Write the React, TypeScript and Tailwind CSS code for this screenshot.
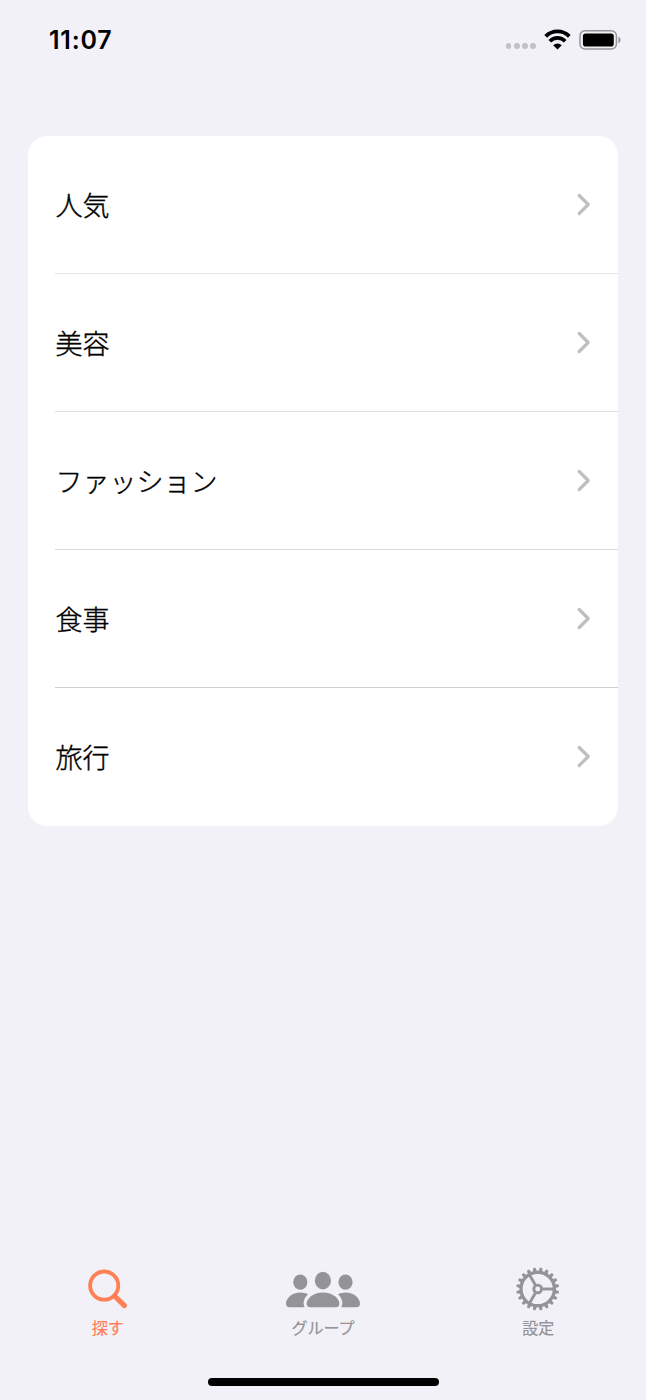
import React from 'react';

const categories = [
  { name: '人気', divider: 'border-b border-[#e5e5e7]' },
  { name: '美容', divider: 'border-b border-[#dfdfe2]' },
  { name: 'ファッション', divider: 'border-b border-[#d9d9dc]' },
  { name: '食事', divider: 'border-b border-[#cfcfd2]' },
  { name: '旅行', divider: 'pb-px' },
];

const TEETH = Array.from({ length: 20 }, (_, i) => i * 18 + 9);

const WifiIcon = () => (
  <svg width="28" height="22" viewBox="0 0 28 22" fill="none">
    <path d="M2.7 8.3A16.6 16.6 0 0 1 26.3 8.3" stroke="#000" strokeWidth="3.9" />
    <path d="M6.8 13.2A10.8 10.8 0 0 1 22.2 13.2" stroke="#000" strokeWidth="3.7" />
    <path d="M14.5 21.5L10.2 17.2A6 6 0 0 1 18.8 17.2Z" fill="#000" />
  </svg>
);

const BatteryIcon = () => (
  <svg width="42" height="20" viewBox="0 0 42 20" fill="none">
    <rect x="1" y="0.8" width="36.4" height="18.2" rx="5" stroke="#96959a" strokeWidth="1.5" />
    <rect x="3.9" y="3.4" width="30.9" height="13.1" rx="2.8" fill="#000" />
    <path d="M39.4 6.8C42.3 8 42.3 12 39.4 13.2Z" fill="#96959a" />
  </svg>
);

const ChevronIcon = () => (
  <svg width="15" height="23" viewBox="0 0 15 23" fill="none">
    <path d="M3.2 2.5L12.2 11.5L3.2 20.5" stroke="#bfbfc1" strokeWidth="3.2" strokeLinecap="round" strokeLinejoin="round" />
  </svg>
);

const SearchIcon = () => (
  <svg width="80" height="48" viewBox="0 0 80 48" fill="none" stroke="currentColor">
    <circle cx="36.2" cy="20.6" r="14.1" strokeWidth="3.8" />
    <path d="M46.6 31L56.4 40.6" strokeWidth="5.2" strokeLinecap="round" />
  </svg>
);

const GroupIcon = () => (
  <svg width="80" height="48" viewBox="0 0 80 48" fill="currentColor">
    <ellipse cx="17.3" cy="17.1" rx="7.1" ry="7.7" />
    <ellipse cx="62.5" cy="17.1" rx="7.1" ry="7.7" />
    <ellipse cx="39.9" cy="15.6" rx="8.1" ry="8.8" />
    <path d="M25.1 29.2C22.8 28.1 20 27.4 17.3 27.4C9.1 27.4 3 33.2 3 38.5C3 41 4.2 42.2 6.7 42.2H21.7C19.2 37.6 21.4 32.4 25.1 29.2Z" />
    <path d="M54.9 29.2C57.2 28.1 60 27.4 62.7 27.4C70.9 27.4 77 33.2 77 38.5C77 41 75.8 42.2 73.3 42.2H58.3C60.8 37.6 58.6 32.4 54.9 29.2Z" />
    <path d="M40 27.4C30 27.4 23.6 33.8 23.6 38.6C23.6 41 24.8 42.2 27.4 42.2H52.6C55.2 42.2 56.4 41 56.4 38.6C56.4 33.8 50 27.4 40 27.4Z" />
  </svg>
);

const GearIcon = () => (
  <svg width="80" height="48" viewBox="0 0 80 48" fill="none" stroke="currentColor">
    <g transform="translate(39.7 24)">
      <circle r="16.7" strokeWidth="3.3" />
      <circle r="3.9" strokeWidth="2.9" />
      {TEETH.map((angle) => (
        <path key={angle} d="M17.5 -2.1L21.4 -1.2V1.2L17.5 2.1Z" fill="currentColor" stroke="none" transform={`rotate(${angle})`} />
      ))}
      {[0, 120, 240].map((angle) => (
        <path key={angle} d="M4.7 0H16" strokeWidth="2.9" transform={`rotate(${angle})`} />
      ))}
    </g>
  </svg>
);

const tabs = [
  { label: '探す', icon: SearchIcon, active: true },
  { label: 'グループ', icon: GroupIcon, active: false },
  { label: '設定', icon: GearIcon, active: false },
];

export default function App() {
  return (
    <div className="flex h-[1400px] w-[646px] flex-col overflow-hidden bg-[#f2f1f7] font-['Noto_Sans_CJK_JP',sans-serif] text-black">
      {/* Status bar */}
      <header className="flex h-[136px] shrink-0 items-start justify-between pl-[49px] pr-[25px] pt-[25px]">
        <span className="font-['Inter',sans-serif] text-[25px] font-semibold leading-[30px] tracking-[0.8px]">11:07</span>
        <div className="flex pt-[3px]">
          <div className="mr-[7px] mt-[15px] flex gap-[2.4px]">
            {[0, 1, 2, 3].map((dot) => (
              <span key={dot} className="size-[5.8px] rounded-full bg-[#c2c1c6]" />
            ))}
          </div>
          <WifiIcon />
          <div className="ml-[8px] mt-[2px]">
            <BatteryIcon />
          </div>
        </div>
      </header>

      {/* Category list */}
      <main className="mx-7 h-[690px] shrink-0 rounded-[19px] bg-white">
        {categories.map(({ name, divider }) => (
          <div key={name} className={`ml-[27px] flex h-[138px] items-center justify-between pr-[27px] ${divider}`}>
            <span className="pl-[0.5px] text-[27px] font-light leading-[40px] [-webkit-text-stroke:0.4px_#000]">{name}</span>
            <ChevronIcon />
          </div>
        ))}
      </main>

      {/* Tab bar */}
      <nav className="mt-auto flex h-[113px] shrink-0">
        {tabs.map(({ label, icon: Icon, active }) => (
          <div key={label} className={`flex flex-1 flex-col items-center ${active ? 'text-[#ff7f56]' : 'text-[#939398]'}`}>
            <Icon />
            <span className="mt-[2px] text-[16px] font-normal leading-[24px] [-webkit-text-stroke:0.2px_currentColor]">{label}</span>
          </div>
        ))}
      </nav>
      <div className="mx-auto mb-[14px] h-[8px] w-[231px] shrink-0 rounded-full bg-black" />
    </div>
  );
}
